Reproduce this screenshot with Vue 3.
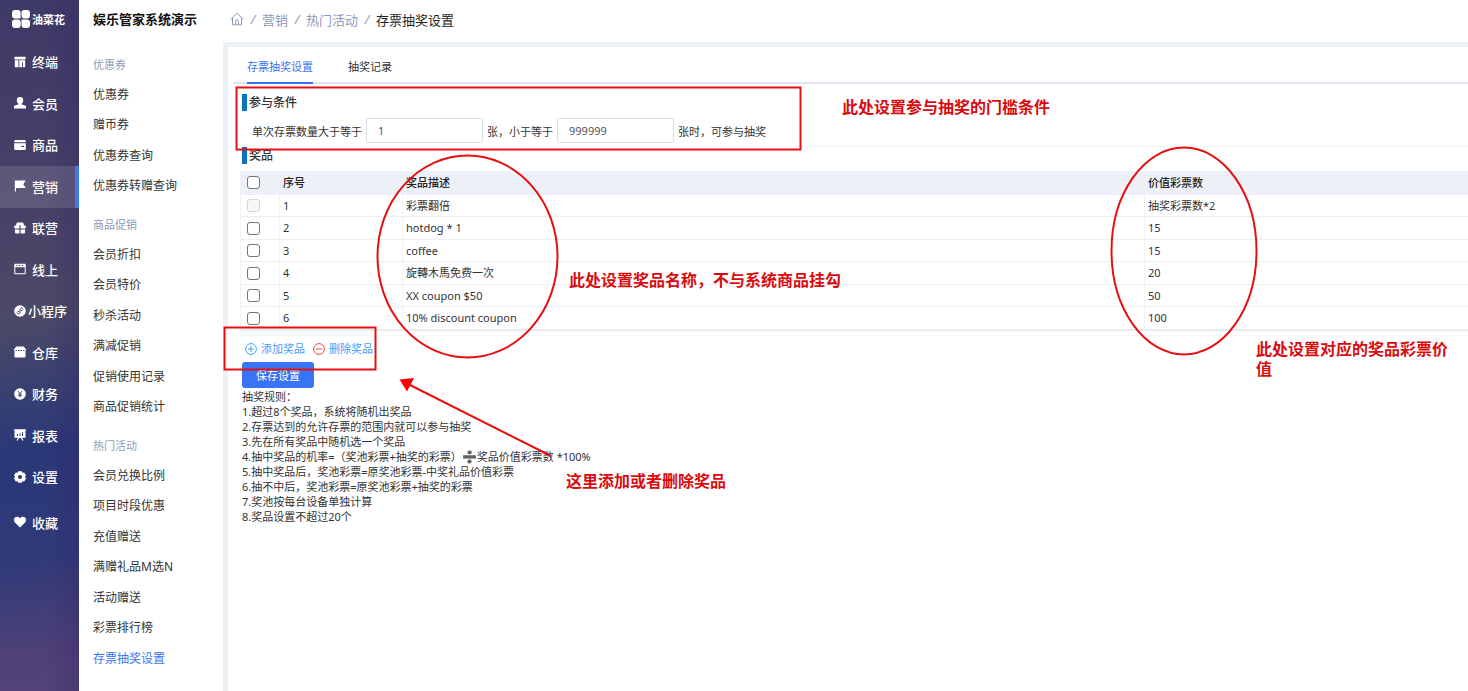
<script setup>
import { ref } from 'vue'

const rail = [
  { name: '终端', icon: 'terminal' },
  { name: '会员', icon: 'member' },
  { name: '商品', icon: 'goods' },
  { name: '营销', icon: 'flag', active: true },
  { name: '联营', icon: 'gift' },
  { name: '线上', icon: 'online' },
  { name: '小程序', icon: 'mini', wide: true },
  { name: '仓库', icon: 'store' },
  { name: '财务', icon: 'money' },
  { name: '报表', icon: 'report' },
  { name: '设置', icon: 'gear' },
  { name: '收藏', icon: 'heart', apart: true },
]

const groups = [
  { title: '优惠券', items: ['优惠券', '赠币券', '优惠券查询', '优惠券转赠查询'] },
  { title: '商品促销', items: ['会员折扣', '会员特价', '秒杀活动', '满减促销', '促销使用记录', '商品促销统计'] },
  {
    title: '热门活动',
    items: ['会员兑换比例', '项目时段优惠', '充值赠送', '满赠礼品M选N', '活动赠送', '彩票排行榜', '存票抽奖设置'],
  },
]
const current = '存票抽奖设置'

const min = ref('1')
const max = ref('999999')

const prizes = [
  { id: 1, desc: '彩票翻倍', value: '抽奖彩票数*2', locked: true },
  { id: 2, desc: 'hotdog * 1', value: '15' },
  { id: 3, desc: 'coffee', value: '15' },
  { id: 4, desc: '旋轉木馬免费一次', value: '20' },
  { id: 5, desc: 'XX coupon $50', value: '50' },
  { id: 6, desc: '10% discount coupon', value: '100' },
]
</script>

<template>
  <div class="page">
    <aside class="rail">
      <div class="brand">
        <svg viewBox="0 0 18 18" width="18" height="18" aria-hidden="true">
          <path fill="#fff" d="M3 0h3a2.600 2.600 0 0 1 2.600 2.600V8.500H3A3 3 0 0 1 0 5.500V3a3 3 0 0 1 3-3zM12 0h3a3 3 0 0 1 3 3v2.500a3 3 0 0 1-3 3h-2.500A3 3 0 0 1 9.500 5.500v-3A2.500 2.500 0 0 1 12 0zM3 9.500h2.700a3 3 0 0 1 3 3V15a3 3 0 0 1-3 3H3a3 3 0 0 1-3-3v-2.500a3 3 0 0 1 3-3zM9.500 9.500H15a3 3 0 0 1 3 3V15a3 3 0 0 1-3 3h-2.500a3 3 0 0 1-3-3z" />
        </svg>
        <span>油菜花</span>
      </div>
      <nav>
        <a
          v-for="r in rail"
          :key="r.name"
          href="#"
          class="rail-item"
          :class="{ active: r.active, wide: r.wide, apart: r.apart }"
        >
          <svg viewBox="0 0 12 12" width="12" height="12" fill="#fff" aria-hidden="true">
            <path v-if="r.icon === 'terminal'" d="M1 .7h10a.6.6 0 0 1 .6.600v2.200H.4V1.300A.6.6 0 0 1 1 .7zM.8 4.300h3.700v7H1.300a.5.5 0 0 1-.5-.5zM5.300 4.300h5.900v6.500a.5.5 0 0 1-.5.5H8.900V6.300H8v5H5.300z" />
            <path v-else-if="r.icon === 'member'" d="M6 0a3.200 3.200 0 0 1 3.200 3.400c0 1.400-.6 2.500-1.400 3.200v.8l3.400 1.200c.5.200.8.6.8 1.100v1.800H0V9.700c0-.5.3-.9.800-1.100l3.400-1.200v-.8C3.400 5.900 2.800 4.800 2.800 3.400A3.200 3.200 0 0 1 6 0z" />
            <path v-else-if="r.icon === 'goods'" fill-rule="evenodd" d="M1.500 1h9A1.300 1.300 0 0 1 11.800 2.300v.9H.2v-.9A1.300 1.300 0 0 1 1.500 1zM.2 4.300h11.600v5.400a1.300 1.300 0 0 1-1.300 1.300h-9A1.300 1.300 0 0 1 .2 9.700zM7.500 6.700v1.200H10V6.700z" />
            <path v-else-if="r.icon === 'flag'" d="M.8.600h10.900L9.300 4.300l2.400 3.700H2v3.600H.8z" />
            <path v-else-if="r.icon === 'gift'" d="M.3 3.500h2.100A2.300 2.300 0 0 1 6 .8a2.300 2.300 0 0 1 3.600 2.700h2.100v3H6.600V3.300H5.400v3.200H.3zM.9 7.500h4.500v4H1.900a1 1 0 0 1-1-1zM6.600 7.500h4.500v3a1 1 0 0 1-1 1H6.600z" />
            <path v-else-if="r.icon === 'online'" fill-rule="evenodd" d="M1.200.8h9.600a.9.9 0 0 1 .9.900v8.600a.9.9 0 0 1-.9.900H1.200a.9.900 0 0 1-.9-.9V1.700a.9.9 0 0 1 .9-.9zM1.300 4.300v5.900h9.400V4.300zM2 1.900v1h1.400v-1zM5 1.900v1h1.400v-1zM8 1.900v1h1.400v-1z" />
            <g v-else-if="r.icon === 'mini'">
              <circle cx="6" cy="6" r="5.800" />
              <path d="M4.900 6.300a1.400 1.400 0 1 0 1.100 1.500V4.200a1.400 1.400 0 1 1 1.100 1.500" fill="none" stroke="#454568" stroke-width=".9" stroke-linecap="round" />
            </g>
            <path v-else-if="r.icon === 'store'" fill-rule="evenodd" d="M2.200.5h7.600L12 3.400v1.300h-.5v6a.8.8 0 0 1-.8.8H1.300a.8.8 0 0 1-.8-.8v-6H0V3.400zM1.500 4v.9h1.600V4zM4.100 4v.9h1.500V4zM6.500 4v.9H8V4zM9 4v.9h1.600V4z" />
            <g v-else-if="r.icon === 'money'">
              <circle cx="6" cy="6" r="5.800" />
              <path d="M3.900 3 6 5.600 8.100 3M6 5.600v3.700M4.200 6h3.600M4.200 7.600h3.600" fill="none" stroke="#37416f" stroke-width=".9" />
            </g>
            <path v-else-if="r.icon === 'report'" fill-rule="evenodd" d="M0 .3h12v1.200h-.5v7.300H8.200l1.300 2.700H8.200L7 9H5l-1.200 2.500H2.500l1.300-2.700H.5V1.500H0zM3 5v2h1V5zM5.500 4.200V7h1V4.200zM8 3v4h1V3z" />
            <path v-else-if="r.icon === 'gear'" fill-rule="evenodd" d="M4.300.200h3.400L8.400 1.800l1.800-.2L12 4.500 10.900 6 12 7.500l-1.800 2.900-1.800-.2-.7 1.600H4.300l-.7-1.600-1.800.2L0 7.500 1.100 6 0 4.500l1.800-2.900 1.800.2zM6 4a2 2 0 1 0 0 4 2 2 0 0 0 0-4z" />
            <path v-else d="M6 11.500 1.100 6.700A3.300 3.300 0 0 1 0 4.200 3.300 3.300 0 0 1 3.200.7C4.400.7 5.500 1.300 6 2.200 6.500 1.300 7.600.7 8.800.7A3.300 3.300 0 0 1 12 4.200a3.300 3.300 0 0 1-1.100 2.500z" />
          </svg>
          <span>{{ r.name }}</span>
        </a>
      </nav>
    </aside>

    <aside class="sub">
      <h1>娱乐管家系统演示</h1>
      <section v-for="g in groups" :key="g.title" class="group">
        <h2>{{ g.title }}</h2>
        <a v-for="i in g.items" :key="i" href="#" :class="{ current: i === current }">{{ i }}</a>
      </section>
    </aside>

    <div class="body">
      <nav class="crumbs">
        <a href="#" aria-label="首页">
          <svg viewBox="0 0 14 14" width="14" height="14" fill="none" stroke="#8d9bb8" stroke-width="1" aria-hidden="true">
            <path d="M.8 7.300 7 1.200l6.200 6.100M2.500 6v6.800h9V6M5.600 12.800V9.300a1.400 1.400 0 0 1 2.800 0v3.500" />
          </svg>
        </a>
        <i>/</i><a href="#">营销</a><i>/</i><a href="#">热门活动</a><i>/</i><b>存票抽奖设置</b>
      </nav>

      <main>
        <div class="tabs">
          <button type="button" class="on">存票抽奖设置</button>
          <button type="button">抽奖记录</button>
        </div>

        <form @submit.prevent>
          <h3>参与条件</h3>
          <div class="cond">
            <label for="min">单次存票数量大于等于</label>
            <input id="min" v-model="min" type="text" />
            <label for="max">张，小于等于</label>
            <input id="max" v-model="max" type="text" />
            <span>张时，可参与抽奖</span>
          </div>

          <h3>奖品</h3>
          <table>
            <colgroup><col class="c1" /><col class="c2" /><col /><col class="c4" /></colgroup>
            <thead>
              <tr>
                <th><input type="checkbox" aria-label="全选" /></th>
                <th>序号</th>
                <th>奖品描述</th>
                <th>价值彩票数</th>
              </tr>
            </thead>
            <tbody>
              <tr v-for="p in prizes" :key="p.id">
                <td><input type="checkbox" :disabled="p.locked" :aria-label="p.desc" /></td>
                <td>{{ p.id }}</td>
                <td>{{ p.desc }}</td>
                <td>{{ p.value }}</td>
              </tr>
            </tbody>
          </table>

          <div class="actions">
            <button type="button">
              <svg viewBox="0 0 12 12" width="12" height="12" fill="none" stroke="#409eff" aria-hidden="true">
                <circle cx="6" cy="6" r="5.400" /><path d="M6 3v6M3 6h6" />
              </svg>添加奖品
            </button>
            <button type="button">
              <svg viewBox="0 0 12 12" width="12" height="12" fill="none" stroke="#f04848" aria-hidden="true">
                <circle cx="6" cy="6" r="5.400" /><path d="M3 6h6" />
              </svg>删除奖品
            </button>
          </div>
          <button type="submit" class="save">保存设置</button>
        </form>

        <div class="rules">
          <p>抽奖规则：</p>
          <p>1.超过8个奖品，系统将随机出奖品</p>
          <p>2.存票达到的允许存票的范围内就可以参与抽奖</p>
          <p>3.先在所有奖品中随机选一个奖品</p>
          <p>4.抽中奖品的机率=（奖池彩票+抽奖的彩票）<span class="div">➗</span>奖品价值彩票数 *100%</p>
          <p>5.抽中奖品后，奖池彩票=原奖池彩票-中奖礼品价值彩票</p>
          <p>6.抽不中后，奖池彩票=原奖池彩票+抽奖的彩票</p>
          <p>7.奖池按每台设备单独计算</p>
          <p>8.奖品设置不超过20个</p>
        </div>
      </main>
    </div>

    <svg class="marks" width="1468" height="691" fill="none" stroke="#e60f12" stroke-width="2" aria-hidden="true">
      <rect x="236.500" y="87.500" width="564" height="62" />
      <rect x="224.500" y="327.500" width="151" height="42" />
      <ellipse cx="467.500" cy="256.500" rx="90" ry="101" />
      <ellipse cx="1184" cy="251" rx="72.500" ry="103.500" />
      <path d="M551 456 408 384" />
      <path d="M399.500 379.500 414 378l-7 13.500z" fill="#f00" stroke="none" />
    </svg>
    <p class="note n1">此处设置参与抽奖的门槛条件</p>
    <p class="note n2">此处设置奖品名称，不与系统商品挂勾</p>
    <p class="note n3">此处设置对应的奖品彩票价值</p>
    <p class="note n4">这里添加或者删除奖品</p>
  </div>
</template>

<style>
body { background: #fff; }
</style>

<style scoped>
* { box-sizing: border-box; margin: 0; }
.page {
  position: relative;
  display: flex;
  min-height: 100vh;
  overflow: hidden;
  font-family: "Noto Sans", "Noto Sans CJK SC", sans-serif;
  font-size: 11px;
  color: #333;
}
a { color: inherit; text-decoration: none; }
button { font: inherit; color: inherit; border: 0; background: none; padding: 0; cursor: pointer; }

.rail {
  flex: none;
  width: 79px;
  color: #fff;
  background:
    linear-gradient(90deg, transparent 60%, rgba(50, 35, 100, .3)),
    linear-gradient(172deg, #3e3a68 0%, #433c67 12%, #494267 32%, #4b4a66 46%, #3a4170 55%, #2a3878 65%, #2f3a78 80%, #4d4178 93%, #54437a 100%);
}
.brand { height: 42px; display: flex; align-items: center; gap: 2px; padding: 0 0 4px 12px; font-size: 11px; font-weight: 700; white-space: nowrap; }
.rail-item { height: 41px; display: flex; align-items: center; gap: 6px; padding: 0 0 2px 14px; font-size: 13px; font-weight: 500; }
.rail-item:nth-child(even) { height: 42px; }
.rail-item.wide { gap: 2px; }
.rail-item.apart { margin-top: 4px; }
.rail-item.active { background: rgba(255, 255, 255, .12); border-right: 4px solid #4078f0; }

.sub { flex: none; width: 144px; padding-left: 14px; }
.sub h1 { height: 41px; line-height: 38px; font-size: 13px; color: #111; white-space: nowrap; }
.group { padding-top: 9px; }
.group h2 { line-height: 29px; font-size: 11px; font-weight: 400; color: #8d9bb8; }
.group a { display: block; line-height: 30px; font-size: 12px; }
.group a:nth-child(even) { line-height: 31px; }
.group a.current { color: #3875f6; }

.body { flex: 1; min-width: 0; display: flex; flex-direction: column; }
.crumbs { height: 42px; display: flex; align-items: center; padding: 0 0 4px 7px; font-size: 13px; color: #8d9bb8; }
.crumbs a svg { display: block; }
.crumbs i { width: 18px; text-align: center; }
.crumbs b { font-weight: 400; color: #222; }
main { flex: 1; border: solid #edf0f6; border-width: 5px 0 0 5px; }

.tabs { display: flex; gap: 35px; height: 37px; margin-left: 5px; padding-left: 14px; border-bottom: 2px solid #dfe6ee; }
.tabs button { height: 37px; padding-top: 2px; border-bottom: 2px solid transparent; }
.tabs .on { color: #3875f6; border-color: #3875f6; }

form { padding: 10px 0 0 12px; }
h3 { margin-left: 2px; padding-left: 2px; border-left: 5px solid #0a73bd; line-height: 17px; font-size: 12px; font-weight: 500; }
.cond { display: flex; align-items: center; gap: 4px; padding: 7px 0 3px 12px; border-bottom: 1px solid #f3f4f6; }
.cond input {
  width: 117px; height: 25px; padding: 0 11px; border: 1px solid #dcdfe6; border-radius: 2px;
  font: inherit; color: #555; outline: 0; background: #fff;
}
table { width: 100%; margin-top: 7px; table-layout: fixed; border-collapse: separate; border-spacing: 0; border-bottom: 1px solid #e6e9ed; }
.c1 { width: 39px; }
.c2 { width: 123px; }
.c4 { width: 324px; }
th { height: 24px; padding: 0 4px 1px; text-align: left; font-weight: 500; line-height: 16px; background: #edf0f6; color: #222; }
td { height: 22px; padding: 0 3px; line-height: 16px; border-bottom: 1px solid #ebeef2; border-left: 1px solid #f0f2f5; }
tr:nth-child(even) td { height: 23px; }
th:first-child { padding-left: 7px; }
td:first-child { padding-left: 6px; }
table input {
  appearance: none; display: block; width: 13px; height: 13px; margin: 0;
  border: 1px solid #767676; border-radius: 3px; background: #fff;
}
table input:disabled { border-color: #d4d4d4; background: #f8f8f8; }
.actions { display: flex; gap: 8px; margin-top: 4px; padding: 5px 0 5px 5px; border-top: 1px solid #f6f7f9; color: #409eff; }
.actions button { display: flex; align-items: center; gap: 4px; line-height: 16px; }
.save { display: block; width: 72px; height: 26px; margin-left: 2px; border-radius: 3px; background: #3875f6; color: #fff; }
.rules { padding: 1px 0 0 14px; line-height: 15px; }
.rules p { height: 15px; }
.div { font-family: "DejaVu Sans", sans-serif; font-size: 12px; }

.marks { position: absolute; left: 0; top: 0; pointer-events: none; }
.note { position: absolute; font-size: 16px; font-weight: 700; line-height: 20px; color: #d90b0f; font-family: "Noto Sans CJK SC", sans-serif; }
.n1 { left: 842px; top: 96px; }
.n2 { left: 569px; top: 269px; }
.n3 { left: 1256px; top: 338px; width: 196px; }
.n4 { left: 566px; top: 470px; }
</style>
